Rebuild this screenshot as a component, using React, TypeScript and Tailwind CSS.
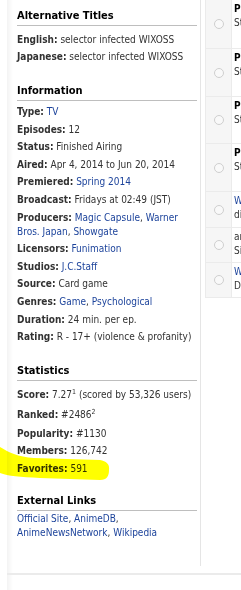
import React from "react";

const Label = ({ children }: { children: React.ReactNode }) => (
  <span className="font-bold text-[#323232]">{children}</span>
);

const A = ({ children }: { children: React.ReactNode }) => (
  <span className="text-[#1c439b]">{children}</span>
);

const Heading = ({ children, className = "" }: { children: React.ReactNode; className?: string }) => (
  <div
    className={
      "text-[11px] leading-[15px] font-bold text-black border-b border-[#bebebe] pb-[2px] mr-[3px] " +
      className
    }
  >
    {children}
  </div>
);

const rows = [
  { h: "h-[48px]", t1: "Prequel", t2: "Story", c1: "font-bold text-black" },
  { h: "h-[48px]", t1: "Prequel", t2: "Story", c1: "font-bold text-black" },
  { h: "h-[47px]", t1: "Prequel", t2: "Story", c1: "font-bold text-black" },
  { h: "h-[48px]", t1: "Prequel", t2: "Story", c1: "font-bold text-black" },
  { h: "h-[36px]", t1: "WIXOSS", t2: "diva", c1: "text-[#1c439b]" },
  { h: "h-[35px]", t1: "anime", t2: "Side", c1: "text-[#323232]" },
  { h: "h-[35px]", t1: "WIXOSS", t2: "Diva", c1: "text-[#1c439b]" },
];

export default function App() {
  return (
    <div
      className="relative w-[241px] h-[590px] overflow-hidden bg-white text-[10px] leading-[14px] text-[#323232]"
      style={{ fontFamily: '"DejaVu Sans Condensed", "DejaVu Sans", sans-serif', fontStretch: "condensed" }}
    >
      <div className="ml-[7px] h-full bg-[linear-gradient(to_right,#f3f3f3,#ffffff_6px)]">
        <div className="flex">
          {/* left column */}
          <div className="w-[194px] shrink-0 h-[566px] border-r border-[#e5e5e5] pl-[10px]">
            <Heading className="mt-[8px]">Alternative Titles</Heading>
            <div className="mt-[7px] flex flex-col gap-[2.5px]">
              <div>
                <Label>English:</Label> selector infected WIXOSS
              </div>
              <div>
                <Label>Japanese:</Label> selector infected WIXOSS
              </div>
            </div>

            <Heading className="mt-[19.5px]">Information</Heading>
            <div className="mt-[4px] flex flex-col gap-[3.6px]">
              <div>
                <Label>Type:</Label> <A>TV</A>
              </div>
              <div>
                <Label>Episodes:</Label> 12
              </div>
              <div>
                <Label>Status:</Label> Finished Airing
              </div>
              <div>
                <Label>Aired:</Label> Apr 4, 2014 to Jun 20, 2014
              </div>
              <div>
                <Label>Premiered:</Label> <A>Spring 2014</A>
              </div>
              <div>
                <Label>Broadcast:</Label> Fridays at 02:49 (JST)
              </div>
              <div className="pr-[4px]">
                <Label>Producers:</Label> <A>Magic Capsule</A>, <A>Warner</A>
                <br />
                <A>Bros. Japan</A>, <A>Showgate</A>
              </div>
              <div>
                <Label>Licensors:</Label> <A>Funimation</A>
              </div>
              <div>
                <Label>Studios:</Label> <A>J.C.Staff</A>
              </div>
              <div>
                <Label>Source:</Label> Card game
              </div>
              <div>
                <Label>Genres:</Label> <A>Game</A>, <A>Psychological</A>
              </div>
              <div>
                <Label>Duration:</Label> 24 min. per ep.
              </div>
              <div>
                <Label>Rating:</Label> R - 17+ (violence &amp; profanity)
              </div>
            </div>

            <Heading className="mt-[18.5px]">Statistics</Heading>
            <div className="mt-[7px] flex flex-col">
              <div>
                <Label>Score:</Label> 7.27<sup className="text-[7px]">1</sup> (scored by 53,326 users)
              </div>
              <div className="mt-[6px]">
                <Label>Ranked:</Label> #2486<sup className="text-[7px]">2</sup>
              </div>
              <div className="mt-[5px]">
                <Label>Popularity:</Label> #1130
              </div>
              <div className="mt-[3px]">
                <Label>Members:</Label> 126,742
              </div>
              <div className="mt-[4px]">
                <Label>Favorites:</Label> 591
              </div>
            </div>

            <Heading className="mt-[17.5px]">External Links</Heading>
            <div className="mt-[1px] pr-[10px]">
              <A>Official Site</A>, <A>AnimeDB</A>,
              <br />
              <A>AnimeNewsNetwork</A>, <A>Wikipedia</A>
            </div>
          </div>

          {/* right column */}
          <div className="pl-[4px] shrink-0">
            <div className="mt-[-1px] w-[80px] border-l border-t border-b border-[#ebebeb]">
              {rows.map((r, i) => (
                <div
                  key={i}
                  className={"flex " + r.h + (i > 0 ? " border-t border-[#ebebeb]" : "")}
                >
                  <div className="w-[26px] shrink-0 bg-[#f6f6f6] border-r border-[#ebebeb] flex items-center justify-center">
                    <div className="w-[10px] h-[10px] rounded-full border border-[#cfcfcf] bg-[#f9f9f9]" />
                  </div>
                  <div className="pl-[2px] pt-[2px] whitespace-nowrap">
                    <div className={r.c1}>{r.t1}</div>
                    <div className="text-[#323232]">{r.t2}</div>
                  </div>
                </div>
              ))}
            </div>
          </div>
        </div>
        <div className="mt-[7px] border-t-2 border-[#ebebeb]" />
      </div>

      {/* yellow highlight marker */}
      <svg
        className="absolute left-0 top-0 pointer-events-none mix-blend-multiply"
        width="241"
        height="590"
        viewBox="0 0 241 590"
      >
        <path
          d="M0,447 C8,452 18,457 34,458 L100,460 C106,461 110,464 109,470 C109,476 107,480 100,480 L40,478 C20,477 8,476 0,473 Z"
          fill="#ffff00"
        />
      </svg>
    </div>
  );
}
